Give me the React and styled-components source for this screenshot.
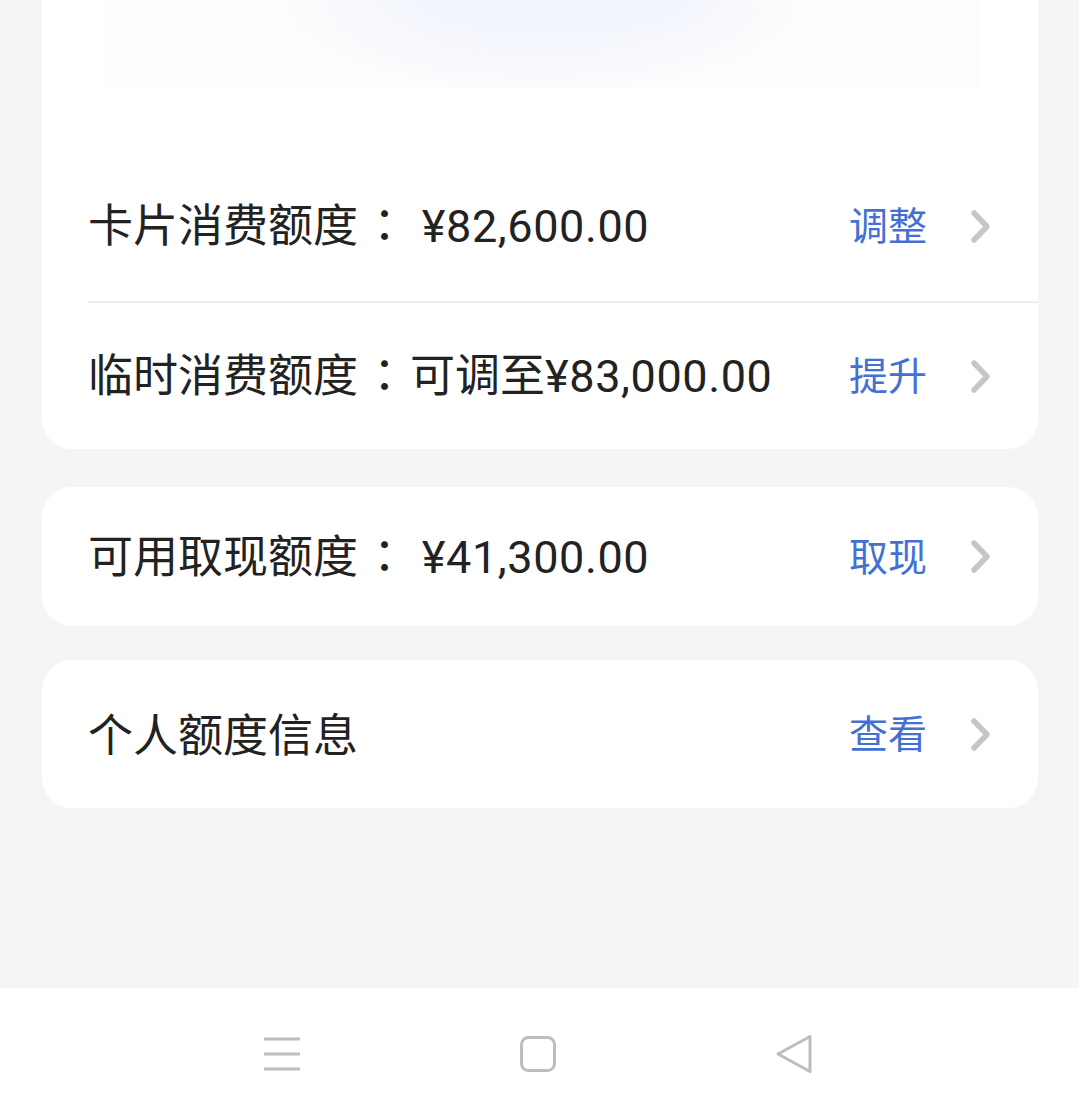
import React from "react";
import styled, { createGlobalStyle } from "styled-components";

const Global = createGlobalStyle`
  html, body { margin: 0; padding: 0; background: #f5f5f5; }
  body { font-family: "Roboto", "Noto Sans CJK SC", sans-serif; }
`;

const Page = styled.div`
  width: 1079px;
  height: 1120px;
  display: flex;
  flex-direction: column;
  background: #f5f5f5;
  overflow: hidden;
`;

const Content = styled.div`
  flex: 1;
  display: flex;
  flex-direction: column;
  padding: 0 41px 0 42px;
`;

const Card = styled.div`
  background: #ffffff;
  border-radius: ${(p) => (p.$flatTop ? "0 0 30px 30px" : "30px")};
  margin-top: ${(p) => p.$mt || 0}px;
  display: flex;
  flex-direction: column;
`;

const Banner = styled.div`
  height: 88px;
  margin: 0 58px 0 62px;
  background:
    radial-gradient(ellipse 180px 44px at 51% 0, #f1f3fd 0%, #f3f5fe 70%, rgba(246, 247, 254, 0) 100%),
    radial-gradient(ellipse 262px 94px at 50% 0, #f5f6fd 0%, #f7f8fd 60%, #fbfbfd 90%, rgba(252, 252, 254, 0) 100%),
    #fdfdfd;
`;

const Spacer = styled.div`
  height: ${(p) => p.$h}px;
`;

const Row = styled.div`
  height: ${(p) => p.$h}px;
  display: flex;
  align-items: center;
  padding: 0 46px 0 46px;
`;

const Label = styled.div`
  flex: 1;
  font-size: 45px;
  line-height: 1;
  color: #222222;
  white-space: pre;
  font-family: "Noto Sans CJK SC", sans-serif;
  padding-bottom: 3px;
`;

const Colon = styled.span`
  font-family: "Noto Sans CJK TC", "Noto Sans CJK JP", sans-serif;
  margin: 0 3px 0 4px;
`;

const Amount = styled.span`
  font-family: "Roboto", "Noto Sans CJK SC", sans-serif;
  letter-spacing: 0.6px;
`;

const Action = styled.span`
  font-family: "Noto Sans CJK SC", sans-serif;
  font-size: 39px;
  line-height: 1;
  color: #4470d4;
  margin-right: 43px;
  padding-bottom: 5px;
`;

const Divider = styled.div`
  height: 2px;
  background: #eeeeee;
  margin-left: 46px;
`;

const NavBar = styled.div`
  height: 132px;
  background: #ffffff;
  display: flex;
  align-items: center;
  justify-content: center;
  gap: 216px;
  padding-right: 3px;
`;

const NavIcon = styled.svg`
  width: 40px;
  height: 40px;
  display: block;
`;

const Chevron = () => (
  <svg width="22" height="35" viewBox="0 0 22 35" style={{ display: "block" }}>
    <path d="M4 4 L17 17.5 L4 31" fill="none" stroke="#c6c6c6" strokeWidth="5.5" strokeLinecap="round" strokeLinejoin="round" />
  </svg>
);

const Item = ({ title, prefix, amount, action, h }) => (
  <Row $h={h}>
    <Label>
      {title}
      {amount !== undefined && <Colon>：</Colon>}
      {prefix}
      {amount !== undefined && <Amount>{amount}</Amount>}
    </Label>
    <Action>{action}</Action>
    <Chevron />
  </Row>
);

export default function App() {
  return (
    <Page>
      <Global />
      <Content>
        <Card $flatTop>
          <Banner />
          <Spacer $h={63} />
          <Item h={150} title="卡片消费额度" amount=" ¥82,600.00" action="调整" />
          <Divider />
          <Item h={146} title="临时消费额度" prefix="可调至" amount="¥83,000.00" action="提升" />
        </Card>
        <Card $mt={38}>
          <Item h={139} title="可用取现额度" amount=" ¥41,300.00" action="取现" />
        </Card>
        <Card $mt={34}>
          <Item h={148} title="个人额度信息" action="查看" />
        </Card>
      </Content>
      <NavBar>
        <NavIcon viewBox="0 0 40 40">
          <g stroke="#bdbdbd" strokeWidth="3">
            <line x1="2" y1="5" x2="38" y2="5" />
            <line x1="2" y1="20" x2="38" y2="20" />
            <line x1="2" y1="35" x2="38" y2="35" />
          </g>
        </NavIcon>
        <NavIcon viewBox="0 0 40 40">
          <rect x="3.5" y="3.5" width="33" height="33" rx="7" fill="none" stroke="#bdbdbd" strokeWidth="3" />
        </NavIcon>
        <NavIcon viewBox="0 0 40 40">
          <path d="M4 20 L36 2.5 L36 37.5 Z" fill="none" stroke="#bdbdbd" strokeWidth="3" strokeLinejoin="round" />
        </NavIcon>
      </NavBar>
    </Page>
  );
}
